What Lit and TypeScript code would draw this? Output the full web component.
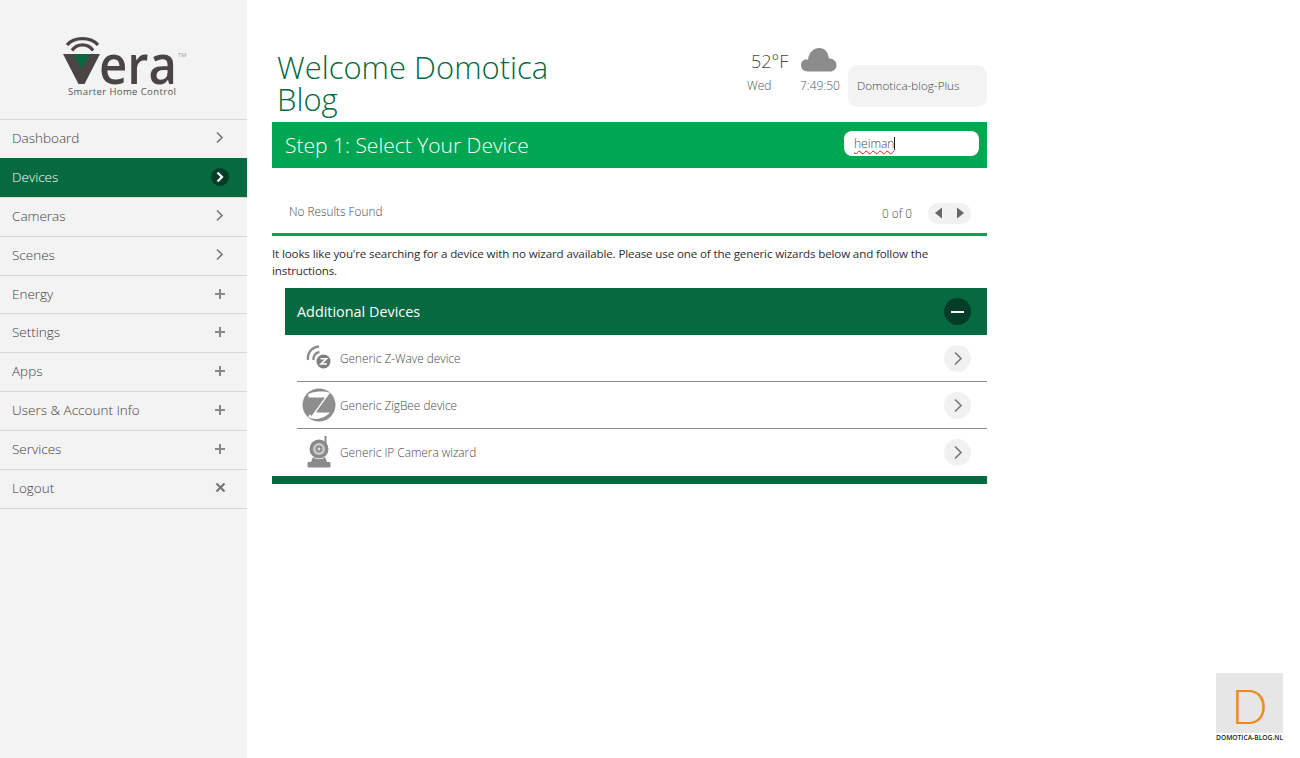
import { LitElement, html, css, svg } from "lit";
import { customElement } from "lit/decorators.js";

const chevron = svg`<path d="M2 1.500 L7 6.500 L2 11.500" fill="none" stroke="#777" stroke-width="1.600"/>`;
const menu: [string, string][] = [
  ["Dashboard", "chev"], ["Devices", "active"], ["Cameras", "chev"], ["Scenes", "chev"],
  ["Energy", "plus"], ["Settings", "plus"], ["Apps", "plus"], ["Users & Account Info", "plus"],
  ["Services", "plus"], ["Logout", "x"],
];

function menuIcon(kind: string) {
  if (kind === "active")
    return html`<span class="dot"><svg width="10" height="12" viewBox="0 0 10 12"><path d="M2.500 1.500 L7 6 L2.500 10.500" fill="none" stroke="#fff" stroke-width="2.200"/></svg></span>`;
  if (kind === "chev")
    return html`<svg width="10" height="13" viewBox="0 0 10 13">${chevron}</svg>`;
  if (kind === "plus")
    return html`<svg width="12" height="12" viewBox="0 0 12 12"><path d="M6 1V11M1 6H11" stroke="#888" stroke-width="2"/></svg>`;
  return html`<svg width="11" height="11" viewBox="0 0 11 11"><path d="M1.500 1.500L9.500 9.500M9.500 1.500L1.500 9.500" stroke="#777" stroke-width="2.200"/></svg>`;
}

const zwave = html`<svg width="28" height="26" viewBox="0 0 28 26"><g fill="none" stroke="#8a8a8a" stroke-width="2.400"><path d="M3 15C2 8 7 2 14 1.500"/><path d="M8.500 15C8 11 10.500 7.500 14.500 7"/></g><circle cx="18.500" cy="16.500" r="7" fill="#808080"/><path d="M15.500 13.800H21.500L16 19H21.800" fill="none" stroke="#fff" stroke-width="1.600"/></svg>`;
const zigbee = html`<svg width="34" height="34" viewBox="0 0 34 34"><circle cx="17" cy="17" r="16.500" fill="#8e8e8e"/><path d="M6 6.500 C10 3.500 22 2.500 28 5 L15 23 H29 C24 31 12 33 6 29 L19 10.500 H7Z" fill="#fff"/><path d="M7 9.500H23L9.500 28 C4 23 3 15 7 9.500Z M27 6.500 L14 24.500 H29.500 C33 17 31 10 27 6.500Z" fill="#8e8e8e"/></svg>`;
const camera = html`<svg width="24" height="32" viewBox="0 0 24 32"><rect x="17.500" y="0" width="2" height="9" fill="#8a8a8a"/><circle cx="12" cy="13" r="9.500" fill="#8a8a8a"/><circle cx="12" cy="13" r="6" fill="#c9c9c9"/><circle cx="12" cy="13" r="3.400" fill="#8a8a8a"/><circle cx="12" cy="13" r="1.500" fill="#ddd"/><path d="M6 21C9 24 15 24 18 21L20 26H4Z" fill="#8a8a8a"/><rect x="0.500" y="26" width="23" height="5.500" rx="1" fill="#8a8a8a"/></svg>`;

const rows = [
  { icon: zwave, label: "Generic Z-Wave device" },
  { icon: zigbee, label: "Generic ZigBee device" },
  { icon: camera, label: "Generic IP Camera wizard" },
];

@customElement("app-root")
export class AppRoot extends LitElement {
  static styles = css`
    :host { display: flex; width: 1300px; height: 758px; background: #fff; font-family: "Open Sans", sans-serif; font-weight: 300; color: #444; overflow: hidden; position: relative; }
    .side { width: 247px; flex: none; background: #f3f3f3; }
    .logo { height: 119px; display: flex; }
    .item { height: 35.900px; border-top: 1px solid #d8d8d8; display: flex; align-items: center; justify-content: space-between; padding: 0 21px 2px 12px; font-size: 13.500px; color: #3f3f3f; }
    .item:last-child { border-bottom: 1px solid #d8d8d8; }
    .item.active { background: #06693f; color: #fff; border-top-color: #06693f; padding-right: 18px; }
    .icon-cell { width: 12px; display: flex; justify-content: center; }
    .dot { width: 18px; height: 18px; border-radius: 50%; background: #043d27; display: flex; align-items: center; justify-content: center; flex: none; }
    .main { width: 715px; margin-left: 25px; display: flex; flex-direction: column; }
    .head { height: 122px; display: flex; justify-content: space-between; align-items: flex-start; }
    h1 { margin: 51px 0 0 5px; width: 300px; font-size: 31px; line-height: 32px; font-weight: 300; color: #06693f; }
    .status { display: flex; align-items: flex-start; margin-top: 47px; }
    .weather { width: 101px; display: grid; grid-template-columns: 53px 48px; font-size: 12px; color: #555; }
    .temp { font-size: 18px; line-height: 28px; color: #444; padding-left: 4px; }
    .cloud { padding-left: 1px; height: 28px; }
    .day, .clock { margin-top: 2px; line-height: 18px; }
    .clock { white-space: nowrap; }
    .account { width: 139px; height: 42px; margin-top: 18px; background: #f3f3f3; border-radius: 10px; font-size: 11.700px; line-height: 40px; padding-left: 9px; box-sizing: border-box; color: #444; }
    .bar { height: 46px; background: #00a651; display: flex; align-items: center; justify-content: space-between; padding: 0 8px 0 13px; color: #fff; font-size: 21px; }
    .search { width: 135px; height: 25px; margin-bottom: 3px; background: #fff; border-radius: 8px; color: #444; font-size: 12px; line-height: 25px; padding-left: 10px; box-sizing: border-box; display: flex; align-items: center; }
    .search u { text-decoration: underline wavy #e01818 1px; text-underline-offset: 2px; }
    .search i { width: 1px; height: 13px; background: #222; }
    .results { height: 68px; border-bottom: 3px solid #00a651; display: flex; align-items: center; justify-content: space-between; padding: 22px 16px 0 17px; font-size: 11.800px; color: #4a4a4a; box-sizing: border-box; }
    .pager { display: flex; align-items: center; gap: 16px; margin-top: 3px; }
    .results > span { margin-bottom: 1px; }
    .arrows { width: 43px; height: 21px; border-radius: 10px; background: #f1f1f1; display: flex; align-items: center; justify-content: space-between; padding: 0 6px; box-sizing: border-box; }
    .note { margin: 9px 0 1px; font-size: 11.600px; line-height: 17px; color: #2e2e2e; font-weight: 400; height: 42px; letter-spacing: -0.14px; }
    .section { margin-left: 13px; }
    .section-head { height: 47px; background: #06693f; color: #fff; display: flex; align-items: center; justify-content: space-between; padding: 0 16px 0 12px; font-size: 14.400px; font-weight: 400; }
    .minus { width: 27px; height: 27px; border-radius: 50%; background: #043d27; display: flex; align-items: center; justify-content: center; }
    .minus span { width: 13px; height: 2px; background: #fff; }
    .row { height: 46px; margin-left: 12px; border-bottom: 1px solid #8c8c8c; display: flex; align-items: center; justify-content: space-between; padding-right: 16px; font-size: 11.800px; color: #4a4a4a; }
    .row:last-child { border-bottom: none; }
    .row-label { display: flex; align-items: center; }
    .row-icon { width: 43px; height: 34px; padding-left: 1px; box-sizing: border-box; display: flex; align-items: center; justify-content: center; }
    .go { width: 27px; height: 27px; margin-top: 1px; border-radius: 50%; background: #f1f1f1; display: flex; align-items: center; justify-content: center; }
    .foot { height: 8px; background: #06693f; margin-top: 1px; }
    .mark { position: absolute; left: 1216px; top: 673px; width: 67px; height: 70px; background: linear-gradient(#e6e6e6 0 60px, #fff 60px); text-align: center; }
    .mark .d { display: block; height: 54px; padding-top: 6px; font-family: "Lato", sans-serif; font-weight: 300; font-size: 48px; line-height: 54px; color: #f08a1c; }
    .mark .t { display: block; font-size: 6.700px; line-height: 9px; white-space: nowrap; color: #222; font-weight: 600; }
  `;

  render() {
    return html`
      <aside class="side">
        <div class="logo">
          <svg width="247" height="119" viewBox="0 0 247 119">
            <g fill="none" stroke="#4a4444" stroke-width="3.200">
              <path d="M67 45C74 36.500 91 36.500 98 45"/><path d="M72 50.500C77 43 88 43 93 50.500"/>
            </g>
            <path d="M63 54H100L84.500 84H78.500Z" fill="#4a4444"/>
            <path d="M73 54.500H90L81.500 68Z" fill="#06693f"/>
            <text x="99" y="84" textLength="78" lengthAdjust="spacingAndGlyphs" font-family="Open Sans, sans-serif" font-size="54" font-weight="600" fill="#4a4444">era</text>
            <text x="178" y="57" font-family="Open Sans, sans-serif" font-size="6" fill="#666">TM</text>
            <text x="68" y="95" textLength="108" font-family="Open Sans, sans-serif" font-size="9.500" font-weight="500" fill="#555">Smarter Home Control</text>
          </svg>
        </div>
        ${menu.map(([label, kind]) => html`
          <div class="item ${kind === "active" ? "active" : ""}">
            <span>${label}</span>
            ${kind === "active" ? menuIcon(kind) : html`<span class="icon-cell">${menuIcon(kind)}</span>`}
          </div>`)}
      </aside>
      <main class="main">
        <header class="head">
          <h1>Welcome Domotica Blog</h1>
          <div class="status">
            <div class="weather">
              <div class="temp">52°F</div>
              <div class="cloud"><svg width="36" height="25" viewBox="0 0 36 25"><path d="M7 24.500C2 24.500 0 21 0 18C0 14 3 12 7 12.500C8 5 13 1 18 1C24 1 27 5 28 11.500C32 11.500 35.500 14 35.500 18C35.500 22 32.500 24.500 29 24.500Z" fill="#8c8c8c"/></svg></div>
              <div class="day">Wed</div>
              <div class="clock">7:49:50</div>
            </div>
            <div class="account">Domotica-blog-Plus</div>
          </div>
        </header>
        <div class="bar">
          <span>Step 1: Select Your Device</span>
          <div class="search"><u>heiman</u><i></i></div>
        </div>
        <div class="results">
          <span>No Results Found</span>
          <div class="pager">
            <span>0 of 0</span>
            <div class="arrows">
              <svg width="9" height="12" viewBox="0 0 9 12"><path d="M8 0.500V11.500L1 6Z" fill="#666"/></svg>
              <svg width="9" height="12" viewBox="0 0 9 12"><path d="M1 0.500V11.500L8 6Z" fill="#666"/></svg>
            </div>
          </div>
        </div>
        <p class="note">It looks like you're searching for a device with no wizard available. Please use one of the generic wizards below and follow the instructions.</p>
        <section class="section">
          <div class="section-head"><span>Additional Devices</span><div class="minus"><span></span></div></div>
          ${rows.map((r) => html`
            <div class="row">
              <div class="row-label"><span class="row-icon">${r.icon}</span><span>${r.label}</span></div>
              <div class="go"><svg width="10" height="15" viewBox="0 0 10 15"><path d="M2 1.500L8 7.500L2 13.500" fill="none" stroke="#777" stroke-width="1.600"/></svg></div>
            </div>`)}
        </section>
        <div class="foot"></div>
      </main>
      <div class="mark"><span class="d">D</span><span class="t">DOMOTICA-BLOG.NL</span></div>
    `;
  }
}
